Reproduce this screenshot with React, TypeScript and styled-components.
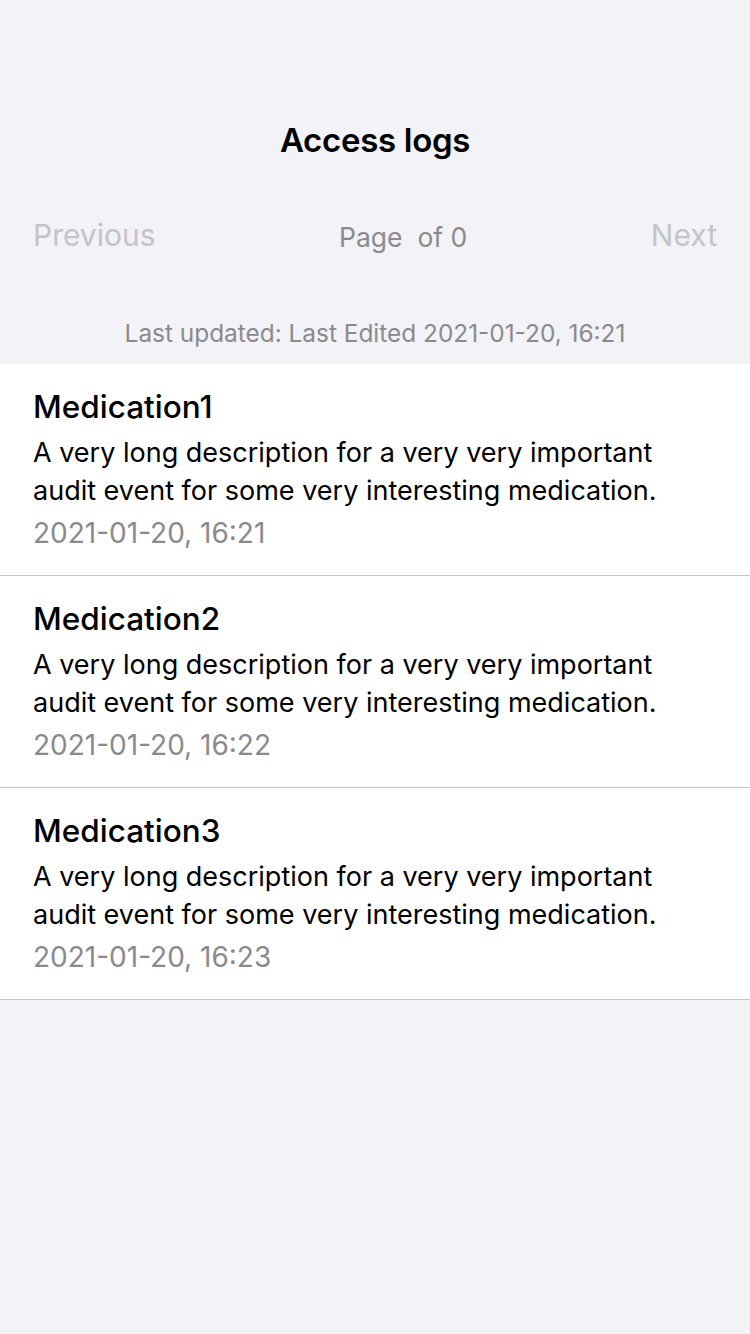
import React from "react";
import styled, { createGlobalStyle } from "styled-components";

const Global = createGlobalStyle`
  html, body { margin: 0; padding: 0; background: #f2f2f7; }
  body { font-family: Inter, "Noto Sans", sans-serif; -webkit-font-smoothing: antialiased; }
`;

const Screen = styled.div`
  width: 750px;
  min-height: 1334px;
  background: #f2f2f7;
  display: flex;
  flex-direction: column;
`;

const Header = styled.header`
  height: 280px;
  display: flex;
  flex-direction: column;
  padding-top: 119px;
  box-sizing: border-box;
`;

const Title = styled.h1`
  margin: 0;
  text-align: center;
  font-size: 33px;
  line-height: 42px;
  font-weight: 600;
  color: #000;
  letter-spacing: -0.3px;
`;

const Pager = styled.div`
  display: flex;
  justify-content: space-between;
  align-items: center;
  padding: 0 33px;
  margin-top: 52px;
  height: 44px;
`;

const PagerButton = styled.span`
  font-size: 30px;
  color: #c4c4c7;
`;

const PageLabel = styled.span`
  font-size: 26.5px;
  color: #8a8a8e;
  white-space: pre;
  padding-top: 3px;
`;

const Updated = styled.div`
  text-align: center;
  font-size: 24.4px;
  line-height: 30px;
  color: #8a8a8e;
  padding: 38px 0 16px;
`;

const List = styled.ul`
  list-style: none;
  margin: 0;
  padding: 0;
  background: #fff;
`;

const Row = styled.li`
  height: 212px;
  box-sizing: border-box;
  padding: 24px 33px 0;
  border-bottom: 1px solid #c6c6c8;
  display: flex;
  flex-direction: column;
`;

const RowTitle = styled.div`
  font-size: 31.5px;
  line-height: 38px;
  font-weight: 500;
  color: #000;
`;

const RowDesc = styled.div`
  font-size: 27px;
  line-height: 38px;
  color: #000;
  margin-top: 8px;
`;

const RowDate = styled.div`
  font-size: 28px;
  line-height: 38px;
  color: #8a8a8e;
  margin-top: 4px;
`;

const items = [
  { name: "Medication1", date: "2021-01-20, 16:21" },
  { name: "Medication2", date: "2021-01-20, 16:22" },
  { name: "Medication3", date: "2021-01-20, 16:23" },
];

export default function App() {
  return (
    <>
      <Global />
      <Screen>
        <Header>
          <Title>Access logs</Title>
          <Pager>
            <PagerButton>Previous</PagerButton>
            <PageLabel>Page  of 0</PageLabel>
            <PagerButton>Next</PagerButton>
          </Pager>
        </Header>
        <Updated>Last updated: Last Edited 2021-01-20, 16:21</Updated>
        <List>
          {items.map((it) => (
            <Row key={it.name}>
              <RowTitle>{it.name}</RowTitle>
              <RowDesc>
                A very long description for a very very important
                <br />
                audit event for some very interesting medication.
              </RowDesc>
              <RowDate>{it.date}</RowDate>
            </Row>
          ))}
        </List>
      </Screen>
    </>
  );
}
